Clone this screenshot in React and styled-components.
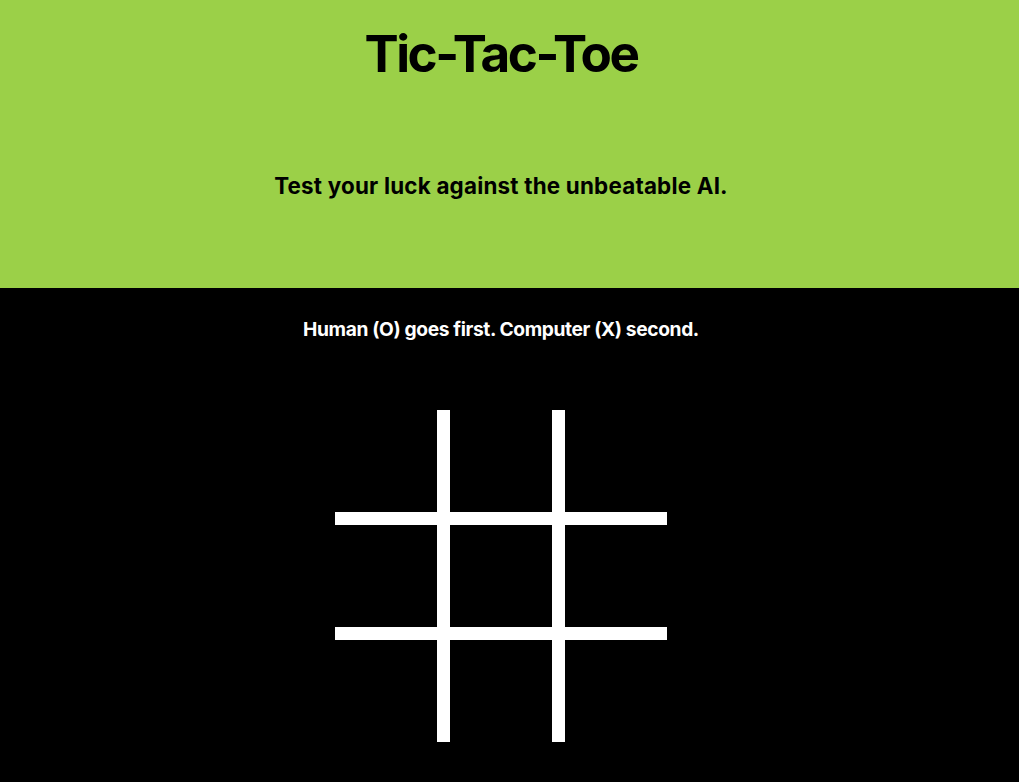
import React from "react";
import styled, { createGlobalStyle } from "styled-components";

const GlobalStyle = createGlobalStyle`
  html, body {
    margin: 0;
    padding: 0;
    background: #000;
  }
  body {
    font-family: Inter, "Noto Sans", sans-serif;
  }
`;

const App = () => {
  const cells = Array.from({ length: 9 }, (_, i) => i);

  return (
    <Page>
      <GlobalStyle />
      <Header>
        <Title>Tic-Tac-Toe</Title>
        <Subtitle>Test your luck against the unbeatable AI.</Subtitle>
      </Header>
      <Main>
        <Status>Human (O) goes first. Computer (X) second.</Status>
        <Board>
          {cells.map((i) => (
            <Cell key={i} $right={i % 3 !== 2} $bottom={i < 6} />
          ))}
        </Board>
      </Main>
    </Page>
  );
};

export default App;

const Page = styled.div`
  min-height: 100vh;
  background: #000;
`;

const Header = styled.header`
  background: #9bd048;
  height: 288px;
  box-sizing: border-box;
  padding: 28px 17px 0 0;
  display: flex;
  flex-direction: column;
  align-items: center;
`;

const Title = styled.h1`
  margin: 0;
  font-size: 51.2px;
  line-height: 1;
  font-weight: 700;
  letter-spacing: -2.5px;
  color: #000;
`;

const Subtitle = styled.p`
  margin: 96px 0 0;
  font-size: 22.4px;
  line-height: 1;
  font-weight: 700;
  letter-spacing: 0.2px;
  color: #000;
`;

const Main = styled.main`
  display: flex;
  flex-direction: column;
  align-items: center;
  padding: 32px 17px 40px 0;
`;

const Status = styled.p`
  margin: 0;
  font-size: 19.2px;
  line-height: 1;
  font-weight: 700;
  letter-spacing: -0.38px;
  color: #fff;
`;

const Board = styled.div`
  margin-top: 71px;
  display: grid;
  grid-template-columns: repeat(3, auto);
`;

const Cell = styled.div`
  width: 102px;
  height: 102px;
  border-right: ${(p) => (p.$right ? "13px solid #fff" : "none")};
  border-bottom: ${(p) => (p.$bottom ? "13px solid #fff" : "none")};
`;
